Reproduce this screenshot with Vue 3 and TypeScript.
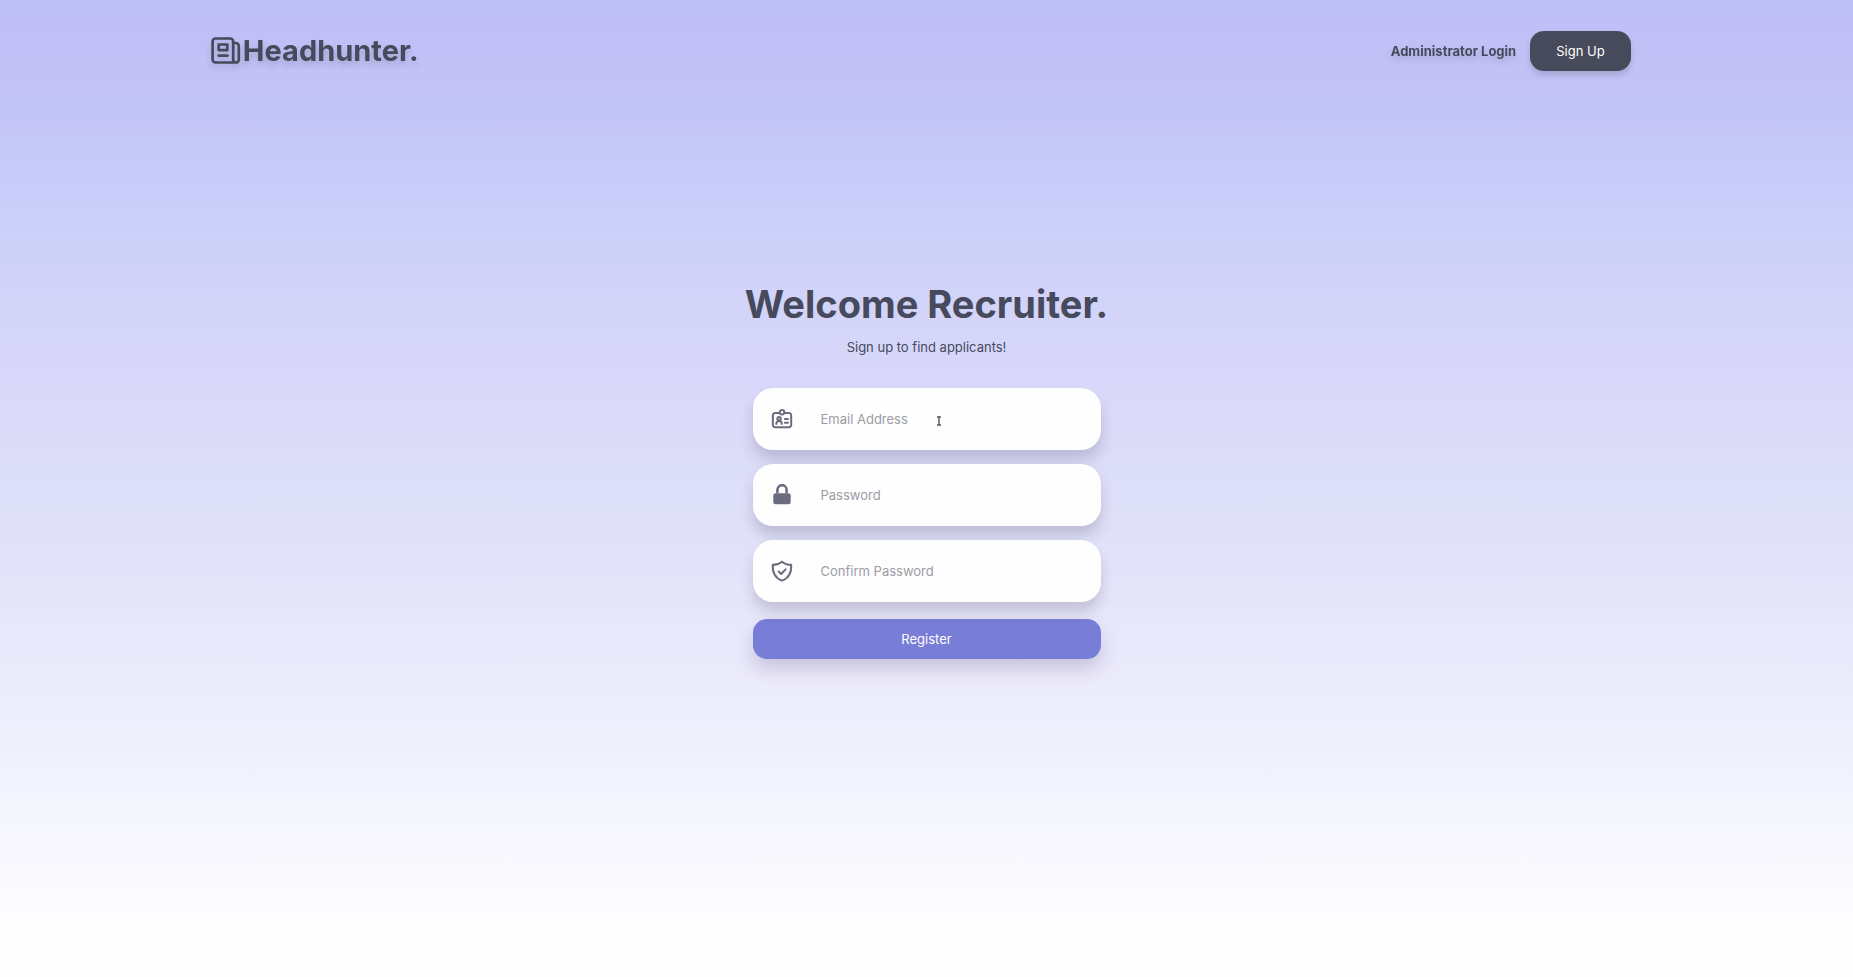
<script setup lang="ts">
import { ref } from 'vue'

const email = ref('')
const password = ref('')
const confirmation = ref('')
</script>

<template>
  <div class="page">
    <header class="header">
      <a class="brand" href="#">
        <svg class="brand-icon" viewBox="0 0 30 30" fill="none" stroke="currentColor" stroke-width="2.7" stroke-linecap="round" stroke-linejoin="round" aria-hidden="true">
          <path d="M25 26.500H4.600a3 3 0 0 1-3-3V5.500a3 3 0 0 1 3-3h14.600a3 3 0 0 1 3 3v18.200a2.800 2.800 0 0 0 5.600 0V10a3 3 0 0 0-3-3h-2.600" />
          <path d="M7.700 8.500h8.600v5.600H7.700z" />
          <path d="M7.700 19.600h8.800" />
        </svg>
        <span>Headhunter.</span>
      </a>
      <nav class="nav">
        <a class="login" href="#">Administrator Login</a>
        <button class="button signup" type="button">Sign Up</button>
      </nav>
    </header>

    <main class="main">
      <h1 class="title">Welcome Recruiter.</h1>
      <p class="subtitle">Sign up to find applicants!</p>
      <form class="form" @submit.prevent>
        <label class="field">
          <svg class="field-icon" viewBox="0 0 24 24" fill="none" stroke="currentColor" stroke-width="2.2" stroke-linecap="round" stroke-linejoin="round" aria-hidden="true">
            <path d="M9 5.500H4.500A2.500 2.500 0 0 0 2 8v10.500A2.500 2.500 0 0 0 4.500 21h15a2.500 2.500 0 0 0 2.500-2.500V8a2.500 2.500 0 0 0-2.500-2.500H15" />
            <circle cx="12" cy="4.600" r="2.500" />
            <circle cx="8.800" cy="11.600" r="1.900" />
            <path d="M5.700 17.300c.3-2 1.400-3.100 3.100-3.100s2.800 1.100 3.100 3.100M15.200 12h3.300M15.200 16h3.300" />
          </svg>
          <input v-model="email" type="email" placeholder="Email Address" aria-label="Email Address" />
          <svg class="pointer" viewBox="0 0 6 10" fill="none" stroke="currentColor" stroke-width="1.400" aria-hidden="true">
            <path d="M1 1h4M3 1v8M1 9h4" />
          </svg>
        </label>
        <label class="field">
          <svg class="field-icon" viewBox="0 0 24 24" aria-hidden="true">
            <path d="M7 11V7.300a5 5 0 0 1 10 0V11" transform="translate(0 -1)" fill="none" stroke="currentColor" stroke-width="2.800" />
            <rect x="2.500" y="10" width="19" height="12" rx="2.500" fill="currentColor" />
          </svg>
          <input v-model="password" type="password" placeholder="Password" aria-label="Password" />
        </label>
        <label class="field">
          <svg class="field-icon" viewBox="0 0 24 24" fill="none" stroke="currentColor" stroke-width="2.2" stroke-linecap="round" stroke-linejoin="round" aria-hidden="true">
            <path d="M12 1.800C9.200 4.200 5.800 5.300 2 5.300c-.5 8.500 2.800 14.700 10 17.200 7.200-2.500 10.500-8.700 10-17.200-3.800 0-7.200-1.100-10-3.500z" />
            <path d="M8.300 12.600l2.800 2.600 4.800-5" />
          </svg>
          <input v-model="confirmation" type="password" placeholder="Confirm Password" aria-label="Confirm Password" />
        </label>
        <button class="button register" type="submit">Register</button>
      </form>
    </main>
  </div>
</template>

<style>
body {
  margin: 0;
}
</style>

<style scoped>
.page {
  box-sizing: border-box;
  min-height: 100vh;
  color: #464a5c;
  font-family: Inter, "Liberation Sans", sans-serif;
  font-size: 13px;
  line-height: 20px;
  background: linear-gradient(180deg, #bfbff8 0%, #c2c3f6 10%, #c8cbf9 18%, #cfd2f8 27%, #d8d7fa 38%, #dcddf8 48%, #e0e2f9 55%, #e8e7fb 64%, #eeedfc 73%, #f4f5fe 82%, #f9f8fe 88%, #fdfcfe 94%, #fefefe 100%);
}

.header {
  display: flex;
  align-items: center;
  justify-content: space-between;
  padding: 30px 12% 0 11%;
}

.brand {
  display: flex;
  align-items: center;
  gap: 2px;
  margin-left: 7px;
  color: inherit;
  font-size: 29px;
  font-weight: 700;
  line-height: 41px;
  text-decoration: none;
  filter: drop-shadow(0 4px 3px rgb(0 0 0 / 15%));
}

.brand-icon {
  width: 30px;
  height: 30px;
}

.nav {
  display: flex;
  align-items: center;
  gap: 14px;
}

.login {
  color: inherit;
  font-weight: 700;
  text-decoration: none;
  filter: drop-shadow(0 4px 3px rgb(0 0 0 / 15%));
}

.button {
  height: 40px;
  padding: 0 26px;
  border: 0;
  border-radius: 14px;
  color: #fff;
  font: inherit;
  cursor: pointer;
}

.signup {
  background: #464a5a;
  box-shadow: 0 4px 6px rgb(0 0 0 / 15%);
}

.main {
  display: flex;
  flex-direction: column;
  align-items: center;
  padding: 209px 16px 40px;
}

.title {
  margin: 0;
  font-size: 38px;
  font-weight: 700;
  line-height: 48px;
}

.subtitle {
  margin: 9px 0 31px;
}

.form {
  display: flex;
  flex-direction: column;
  gap: 14px;
  width: 100%;
  max-width: 348px;
}

.field {
  position: relative;
  box-sizing: border-box;
  display: flex;
  align-items: center;
  gap: 28px;
  height: 62px;
  padding: 0 18px;
  border-radius: 20px;
  background: #fefefe;
  box-shadow: 0 10px 14px rgb(60 50 90 / 20%);
}

.field-icon {
  flex: none;
  width: 22px;
  height: 22px;
  color: #6b6c7d;
}

.field input {
  flex: 1;
  min-width: 0;
  padding: 0;
  border: 0;
  outline: 0;
  background: transparent;
  color: #464a5c;
  font: inherit;
  line-height: 20px;
}

.field input::placeholder {
  color: #9c9ca5;
  opacity: 1;
}

.pointer {
  position: absolute;
  top: 28px;
  left: 183px;
  width: 6px;
  height: 10px;
  color: #55555c;
  pointer-events: none;
}

.register {
  margin-top: 3px;
  background: #787dd7;
  box-shadow: 0 10px 18px rgb(60 50 90 / 20%);
}
</style>
